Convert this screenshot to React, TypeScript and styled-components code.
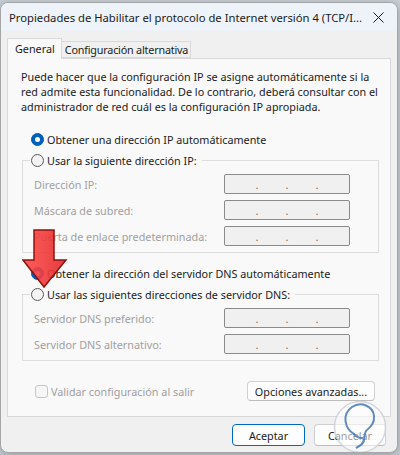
import React from "react";
import styled, { createGlobalStyle } from "styled-components";

const FONT = `"Noto Sans", "Open Sans", sans-serif`;

const GlobalStyle = createGlobalStyle`
  html, body { margin: 0; padding: 0; }
  body {
    width: 400px;
    height: 455px;
    overflow: hidden;
    background: #c7ced6;
    font-family: ${FONT};
    font-size: 10.8px;
    color: #1b1b1b;
  }
  * { box-sizing: border-box; }
`;

const Page = styled.div`
  padding-top: 2px;
`;

const Window = styled.div`
  position: relative;
  width: 398px;
  height: 451px;
  border: 1px solid #a6a6a6;
  border-radius: 8px;
  background: #f0f0f0;
  display: flex;
  flex-direction: column;
  overflow: hidden;
  box-shadow: 0 2px 8px rgba(0, 0, 0, 0.25);
`;

const TitleBar = styled.div`
  height: 28px;
  flex: none;
  display: flex;
  align-items: center;
  justify-content: space-between;
  padding: 0 5px 0 8px;
  background: #eef3f9;
`;

const Title = styled.div`
  font-size: 11.25px;
  color: #1a1a1a;
  white-space: nowrap;
`;

const CloseButton = styled.div`
  width: 28px;
  height: 28px;
  display: flex;
  align-items: center;
  justify-content: center;
`;

const Body = styled.div`
  flex: 1;
  display: flex;
  flex-direction: column;
  padding: 7px 6px 0 6px;
`;

const TabRow = styled.div`
  display: flex;
  align-items: flex-end;
  height: 20px;
  position: relative;
  z-index: 1;
`;

const Tab = styled.div<{ $active?: boolean }>`
  height: ${(p) => (p.$active ? 21 : 17)}px;
  margin-bottom: ${(p) => (p.$active ? -1 : 0)}px;
  padding: ${(p) => (p.$active ? "2px 6px 0 7px" : "0 2px 0 3px")};
  display: flex;
  align-items: ${(p) => (p.$active ? "flex-start" : "center")};
  border: 1px solid #d9d9d9;
  border-bottom: ${(p) => (p.$active ? "none" : "1px solid #d9d9d9")};
  border-left: ${(p) => (p.$active ? "1px solid #d9d9d9" : "none")};
  background: ${(p) => (p.$active ? "#f9f9f9" : "#f0f0f0")};
  color: #1b1b1b;
  white-space: nowrap;
  letter-spacing: ${(p) => (p.$active ? "0" : "-0.2px")};
`;

const Panel = styled.div`
  height: 359px;
  border: 1px solid #d9d9d9;
  background: #f9f9f9;
  display: flex;
  flex-direction: column;
  padding: 10px 11px 0 13px;
`;

const Intro = styled.p`
  margin: 0;
  line-height: 15px;
  color: #1b1b1b;
`;

const RadioRow = styled.label<{ $mt: number }>`
  display: flex;
  align-items: center;
  gap: 3px;
  height: 15px;
  margin: ${(p) => p.$mt}px 0 0 10px;
  line-height: 15px;
  color: #1b1b1b;
  white-space: nowrap;
`;

const RadioDot = styled.span<{ $on?: boolean }>`
  width: 13px;
  height: 13px;
  flex: none;
  border-radius: 50%;
  border: 1px solid ${(p) => (p.$on ? "#005fb8" : "#5a5a5a")};
  background: ${(p) => (p.$on ? "#005fb8" : "#f3f3f3")};
  display: flex;
  align-items: center;
  justify-content: center;
  &::after {
    content: "";
    display: ${(p) => (p.$on ? "block" : "none")};
    width: 5px;
    height: 5px;
    border-radius: 50%;
    background: #ffffff;
  }
`;

const Group = styled.fieldset<{ $mt: number }>`
  margin: ${(p) => p.$mt}px 0 0 1px;
  border: 1px solid #dcdcdc;
  padding: 6px 27px 6px 11px;
  display: flex;
  flex-direction: column;
  gap: 6px;
  min-width: 0;
`;

const Legend = styled.legend`
  margin-left: -4px;
  padding: 0 5px 0 1px;
`;

const LegendRow = styled.span`
  display: flex;
  align-items: center;
  gap: 3px;
  height: 15px;
  line-height: 15px;
  color: #1b1b1b;
  white-space: nowrap;
`;

const FieldRow = styled.div`
  display: grid;
  grid-template-columns: 190px 126px;
  align-items: center;
  height: 20px;
`;

const FieldLabel = styled.span`
  color: #a0a0a0;
  white-space: nowrap;
`;

const IpBox = styled.div`
  height: 20px;
  border: 1px solid #8a8a8a;
  border-radius: 2px;
  background: #f0f0f0;
  display: flex;
  justify-content: center;
  align-items: center;
  gap: 27px;
  line-height: 15px;
`;

const IpDot = styled.span`
  width: 3px;
  text-align: center;
  color: #6d6d6d;
  font-size: 10.8px;
`;

const BottomRow = styled.div`
  margin-top: 20px;
  display: flex;
  align-items: center;
  justify-content: space-between;
  padding: 0 4px 0 14px;
  height: 20px;
`;

const CheckRow = styled.label`
  display: flex;
  align-items: center;
  gap: 3px;
  color: #a0a0a0;
  white-space: nowrap;
`;

const CheckBox = styled.span`
  width: 13px;
  height: 13px;
  border: 1px solid #c6c6c6;
  border-radius: 3px;
  background: #f6f6f6;
`;

const Button = styled.button<{ $w: number; $h: number; $primary?: boolean }>`
  width: ${(p) => p.$w}px;
  height: ${(p) => p.$h}px;
  border: 1px solid ${(p) => (p.$primary ? "#0067c0" : "#d0d0d0")};
  border-bottom-color: ${(p) => (p.$primary ? "#0067c0" : "#bcbcbc")};
  border-radius: 4px;
  background: #fdfdfd;
  font-family: ${FONT};
  font-size: 10.8px;
  color: #1b1b1b;
  padding: 0;
  white-space: nowrap;
`;

const Footer = styled.div`
  display: flex;
  justify-content: flex-end;
  gap: 9px;
  padding: 7px 5px 0 0;
`;

const ArrowOverlay = styled.svg`
  position: absolute;
  left: 21px;
  top: 223px;
  z-index: 5;
  pointer-events: none;
`;

const Watermark = styled.svg`
  position: absolute;
  left: 331px;
  top: 395px;
  z-index: 5;
  pointer-events: none;
`;

const Ip = () => (
  <IpBox>
    <IpDot>.</IpDot>
    <IpDot>.</IpDot>
    <IpDot>.</IpDot>
  </IpBox>
);

export default function App() {
  return (
    <>
      <GlobalStyle />
      <Page>
        <Window>
          <TitleBar>
            <Title>Propiedades de Habilitar el protocolo de Internet versión 4 (TCP/I...</Title>
            <CloseButton>
              <svg width="11" height="11" viewBox="0 0 11 11">
                <path d="M0.5 0.5 L10.5 10.5 M10.5 0.5 L0.5 10.5" stroke="#1a1a1a" strokeWidth="1" />
              </svg>
            </CloseButton>
          </TitleBar>
          <Body>
            <TabRow>
              <Tab $active>General</Tab>
              <Tab>Configuración alternativa</Tab>
            </TabRow>
            <Panel>
              <Intro>
                Puede hacer que la configuración IP se asigne automáticamente si la
                <br />
                red admite esta funcionalidad. De lo contrario, deberá consultar con el
                <br />
                administrador de red cuál es la configuración IP apropiada.
              </Intro>
              <RadioRow $mt={18}>
                <RadioDot $on />
                Obtener una dirección IP automáticamente
              </RadioRow>
              <Group $mt={6}>
                <Legend>
                  <LegendRow>
                    <RadioDot />
                    Usar la siguiente dirección IP:
                  </LegendRow>
                </Legend>
                <FieldRow>
                  <FieldLabel>Dirección IP:</FieldLabel>
                  <Ip />
                </FieldRow>
                <FieldRow>
                  <FieldLabel>Máscara de subred:</FieldLabel>
                  <Ip />
                </FieldRow>
                <FieldRow>
                  <FieldLabel>Puerta de enlace predeterminada:</FieldLabel>
                  <Ip />
                </FieldRow>
              </Group>
              <RadioRow $mt={13}>
                <RadioDot $on />
                Obtener la dirección del servidor DNS automáticamente
              </RadioRow>
              <Group $mt={6}>
                <Legend>
                  <LegendRow>
                    <RadioDot />
                    Usar las siguientes direcciones de servidor DNS:
                  </LegendRow>
                </Legend>
                <FieldRow>
                  <FieldLabel>Servidor DNS preferido:</FieldLabel>
                  <Ip />
                </FieldRow>
                <FieldRow>
                  <FieldLabel>Servidor DNS alternativo:</FieldLabel>
                  <Ip />
                </FieldRow>
              </Group>
              <BottomRow>
                <CheckRow>
                  <CheckBox />
                  Validar configuración al salir
                </CheckRow>
                <Button $w={128} $h={20}>Opciones avanzadas...</Button>
              </BottomRow>
            </Panel>
            <Footer>
              <Button $w={73} $h={22} $primary>Aceptar</Button>
              <Button $w={72} $h={22}>Cancelar</Button>
            </Footer>
          </Body>
          <ArrowOverlay width="46" height="64" viewBox="0 0 46 64">
            <defs>
              <linearGradient id="ag" x1="0" y1="0" x2="1" y2="0">
                <stop offset="0" stopColor="#ff4a4a" />
                <stop offset="0.5" stopColor="#f23b3b" />
                <stop offset="1" stopColor="#e02828" />
              </linearGradient>
            </defs>
            <path
              d="M12 4 L32 4 L32 34 L44 34 L22 61 L1 34 L12 34 Z"
              fill="url(#ag)"
              fillOpacity="0.9"
              stroke="#8e1212"
              strokeWidth="1.5"
              strokeLinejoin="miter"
            />
          </ArrowOverlay>
          <Watermark width="56" height="56" viewBox="0 0 56 56">
            <circle cx="28" cy="29" r="25.5" fill="rgba(255,255,255,0.55)" stroke="rgba(200,205,212,0.8)" strokeWidth="1.5" />
            <path
              d="M22 36 C12 30 10 16 20 9 C29 3 41 8 42 18 C43 26 37 30 34 33 C32 36 33 41 31 44 C30 47 27 48 24 50 C28 48 31 46 32 43"
              fill="none"
              stroke="rgba(70,120,185,0.85)"
              strokeWidth="2"
              strokeLinecap="round"
            />
            <path d="M22 36 C24 39 27 40 30 40" fill="none" stroke="rgba(70,120,185,0.85)" strokeWidth="2" strokeLinecap="round" />
          </Watermark>
        </Window>
      </Page>
    </>
  );
}
